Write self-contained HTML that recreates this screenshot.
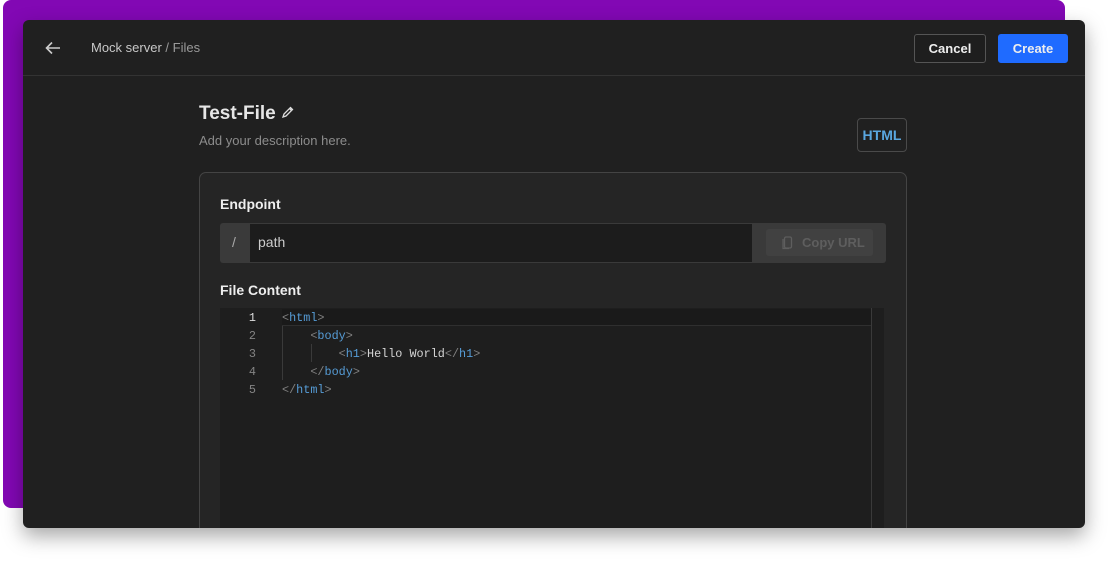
<!DOCTYPE html>
<html><head><style>
*{box-sizing:border-box;margin:0;padding:0}
body{width:1108px;height:566px;background:#fff;position:relative;overflow:hidden;font-family:"Liberation Sans",sans-serif}
.purple{position:absolute;left:3px;top:0;width:1062px;height:508px;background:#8208b4;border-radius:8px}
.win{position:absolute;left:23px;top:20px;width:1062px;height:508px;background:#202020;border-radius:6px;box-shadow:0 8px 20px rgba(0,0,0,.35);overflow:hidden}
.hdr{height:56px;border-bottom:1px solid #333;position:relative}
.bc{position:absolute;left:68px;top:20px;font-size:13px;color:#c8c8c8}
.bc span{color:#9a9a9a}
.btn{position:absolute;top:14px;height:29px;border-radius:3px;font-size:13px;font-weight:bold;color:#eee;text-align:center;line-height:27px}
.cancel{left:891px;width:72px;border:1px solid #555;background:#1e1e1e}
.create{left:975px;width:70px;background:#1f6bff;border:1px solid #1f6bff}
.title{position:absolute;left:176px;top:83px;font-size:19px;font-weight:bold;color:#e6e6e6}
.desc{position:absolute;left:176px;top:113px;font-size:13px;color:#8c8c8c}
.html{position:absolute;left:834px;top:98px;width:50px;height:34px;border:1px solid #4a4a4a;border-radius:4px;color:#5aa7e0;font-weight:bold;font-size:14px;text-align:center;line-height:32px}
.card{position:absolute;left:176px;top:152px;width:708px;height:400px;border:1px solid #444;border-radius:7px;background:#252525}
.lbl{position:absolute;left:20px;font-size:14px;font-weight:bold;color:#eee}
.row{position:absolute;left:20px;top:50px;width:666px;height:40px;background:#3a3a3a;border-radius:3px}
.inp{position:absolute;left:30px;top:1px;width:502px;height:38px;background:#1c1c1c;color:#ccc;font-size:14px;padding-left:8px;line-height:37px}
.slash{position:absolute;left:12px;top:11px;color:#aaa;font-size:14px}
.copy{position:absolute;left:546px;top:6px;width:107px;height:27px;background:#414141;border-radius:3px;color:#5e5e5e;font-size:13px;font-weight:bold;line-height:27px;padding-left:36px}
.ed{position:absolute;left:20px;top:135px;width:664px;height:230px;background:#1e1e1e;font-family:"Liberation Mono",monospace;font-size:11.8px}
.ln{position:absolute;left:0;width:36px;text-align:right;color:#858585}
.cd{position:absolute;left:62px;color:#808080;white-space:pre}
.t{color:#569cd6}.w{color:#d4d4d4}
</style></head><body>
<div class="purple"></div>
<div class="win">
 <div class="hdr">
  <svg style="position:absolute;left:22px;top:21px" width="16" height="14" viewBox="0 0 16 14"><path d="M15 7H2M7 1.5L1.5 7 7 12.5" stroke="#ccc" stroke-width="1.6" fill="none"/></svg>
  <div class="bc">Mock server <span>/ Files</span></div>
  <div class="btn cancel">Cancel</div>
  <div class="btn create">Create</div>
 </div>
 <div class="title">Test-File <svg width="14" height="14" viewBox="0 0 14 14" style="vertical-align:0"><path d="M2 12l1-3 6.5-6.5 2 2L5 11z M8.5 3.5l2 2" stroke="#ddd" stroke-width="1.3" fill="none"/></svg></div>
 <div class="desc">Add your description here.</div>
 <div class="html">HTML</div>
 <div class="card">
  <div class="lbl" style="top:23px">Endpoint</div>
  <div class="row"><div class="slash">/</div><div class="inp">path</div>
   <div class="copy"><svg style="position:absolute;left:16px;top:7px" width="11" height="14" viewBox="0 0 11 14"><rect x="2.5" y="1" width="7" height="11" rx="1.5" stroke="#5e5e5e" fill="none" stroke-width="1.3"/><path d="M1 3v9.5h6" stroke="#5e5e5e" fill="none" stroke-width="1.2"/></svg>Copy URL</div></div>
  <div class="lbl" style="top:109px">File Content</div>
  <div class="ed">
   <div style="position:absolute;left:62px;top:1px;width:590px;height:17px;border-bottom:1px solid #2f2f2f;background:#1a1a1a"></div>
   <div style="position:absolute;left:651px;top:0;width:1px;height:230px;background:#3a3a3a"></div>
   <div style="position:absolute;left:62px;top:18px;width:1px;height:54px;background:#3a3a3a"></div>
   <div style="position:absolute;left:91px;top:36px;width:1px;height:18px;background:#3a3a3a"></div>
   <div class="ln" style="top:3px;color:#ddd">1</div><div class="cd" style="top:3px">&lt;<span class="t">html</span>&gt;</div>
   <div class="ln" style="top:21px">2</div><div class="cd" style="top:21px">    &lt;<span class="t">body</span>&gt;</div>
   <div class="ln" style="top:39px">3</div><div class="cd" style="top:39px">        &lt;<span class="t">h1</span>&gt;<span class="w">Hello World</span>&lt;/<span class="t">h1</span>&gt;</div>
   <div class="ln" style="top:57px">4</div><div class="cd" style="top:57px">    &lt;/<span class="t">body</span>&gt;</div>
   <div class="ln" style="top:75px">5</div><div class="cd" style="top:75px">&lt;/<span class="t">html</span>&gt;</div>
  </div>
 </div>
</div>
</body></html>
